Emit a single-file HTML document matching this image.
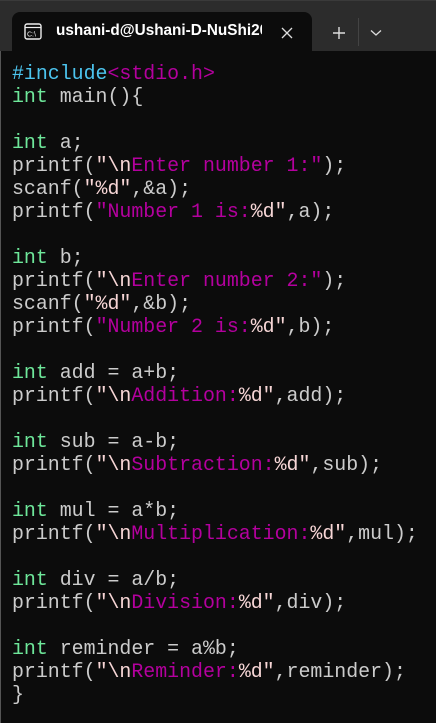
<!DOCTYPE html>
<html><head><style>
html,body{margin:0;padding:0;width:436px;height:723px;overflow:hidden;background:#2c2c2c;}
.tabbar{position:absolute;left:0;top:0;width:436px;height:51px;background:#2c2c2c;border-top:1px solid #3a3a3a;box-sizing:border-box;}
.tab{position:absolute;left:12px;top:11px;width:300px;height:40px;background:#0c0c0c;border-radius:8px 8px 0 0;}
.title{position:absolute;left:56px;top:21px;font:600 15.3px "Liberation Sans",sans-serif;color:#fff;white-space:nowrap;width:206px;overflow:hidden;}
.term{position:absolute;left:0;top:51px;width:436px;height:672px;background:#0c0c0c;border-left:1px solid #555;box-sizing:border-box;}
pre{margin:0;position:absolute;left:11px;top:11px;font:19.9px/23.0px "Liberation Mono",monospace;color:#cccccc;}
.k{color:#6ee79a}.i{color:#4cc4ee}.s{color:#b4009e}.e{color:#f7d6d6}
</style></head><body>
<div class="tabbar">
 <div class="tab"></div>
 <svg style="position:absolute;left:24px;top:22px" width="19" height="18" viewBox="0 0 19 18"><rect x="1" y="1" width="16" height="15" rx="2" fill="none" stroke="#eee" stroke-width="1.4"/><line x1="1" y1="4.5" x2="17" y2="4.5" stroke="#eee" stroke-width="1.2"/><text x="3" y="13.5" font-family="Liberation Sans" font-size="7" fill="#eee">C:\</text></svg>
 <div class="title">ushani-d@Ushani-D-NuShi20</div>
 <svg style="position:absolute;left:281px;top:26px" width="12" height="12"><path d="M1 1L11 11M11 1L1 11" stroke="#ddd" stroke-width="1.3"/></svg>
 <svg style="position:absolute;left:332px;top:25px" width="14" height="14"><path d="M7 1V13M1 7H13" stroke="#ddd" stroke-width="1.4"/></svg>
 <div style="position:absolute;left:358px;top:17px;width:1px;height:28px;background:#444"></div>
 <svg style="position:absolute;left:370px;top:28px" width="12" height="8"><path d="M1 1.5L6 6L11 1.5" fill="none" stroke="#ddd" stroke-width="1.3"/></svg>
</div>
<div class="term"><pre><span class="i">#include</span><span class="s">&lt;stdio.h&gt;</span>
<span class="k">int</span> main(){

<span class="k">int</span> a;
printf(<span class="e">"\n</span><span class="s">Enter number 1:"</span>);
scanf(<span class="e">"%d"</span>,&amp;a);
printf(<span class="s">"Number 1 is:</span><span class="e">%d"</span>,a);

<span class="k">int</span> b;
printf(<span class="e">"\n</span><span class="s">Enter number 2:"</span>);
scanf(<span class="e">"%d"</span>,&amp;b);
printf(<span class="s">"Number 2 is:</span><span class="e">%d"</span>,b);

<span class="k">int</span> add = a+b;
printf(<span class="e">"\n</span><span class="s">Addition:</span><span class="e">%d"</span>,add);

<span class="k">int</span> sub = a-b;
printf(<span class="e">"\n</span><span class="s">Subtraction:</span><span class="e">%d"</span>,sub);

<span class="k">int</span> mul = a*b;
printf(<span class="e">"\n</span><span class="s">Multiplication:</span><span class="e">%d"</span>,mul);

<span class="k">int</span> div = a/b;
printf(<span class="e">"\n</span><span class="s">Division:</span><span class="e">%d"</span>,div);

<span class="k">int</span> reminder = a%b;
printf(<span class="e">"\n</span><span class="s">Reminder:</span><span class="e">%d"</span>,reminder);
}</pre></div>
</body></html>
